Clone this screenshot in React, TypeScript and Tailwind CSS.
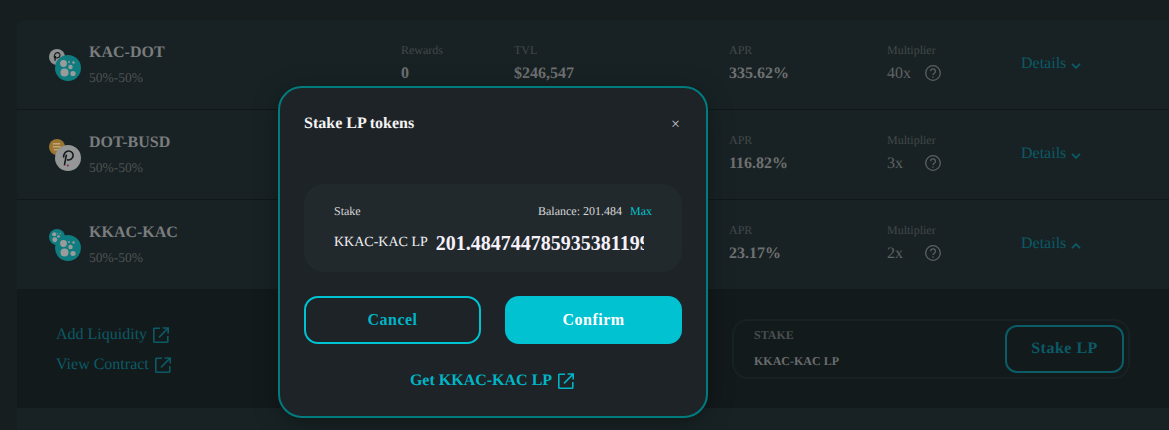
import React from 'react';

const ExternalIcon = ({ className }: { className: string }) => (
  <svg viewBox="0 0 16 16" fill="none" stroke="currentColor" strokeWidth="1.6" className={className}>
    <path d="M7 1.2H1.6a.8.8 0 0 0-.8.8v12.4a.8.8 0 0 0 .8.8H14a.8.8 0 0 0 .8-.8V9" />
    <path d="M6 10.4 14.6 1.6M9.6 1h5.6v5.6" />
  </svg>
);

const HelpIcon = () => (
  <svg viewBox="0 0 16 16" fill="none" stroke="#5c6061" strokeWidth="1.3" className="w-4 h-4 mb-[2px]">
    <circle cx="8" cy="8" r="7.3" />
    <path d="M5.6 6.2a2.4 2.4 0 1 1 3.6 2.1c-.8.4-1.2.9-1.2 1.7" />
    <circle cx="8" cy="12" r=".8" fill="#5c6061" stroke="none" />
  </svg>
);

const Chevron = ({ up }: { up?: boolean }) => (
  <svg viewBox="0 0 10 6" fill="none" stroke="#0b5a66" strokeWidth="1.9" className="w-[10px] h-[6px] ml-[5px] mt-[3px]">
    <path d={up ? 'M1 5.2 5 1.2 9 5.2' : 'M1 .8 5 4.8 9 .8'} />
  </svg>
);

const KacCoin = ({ className }: { className: string }) => (
  <svg viewBox="0 0 26 26" className={className}>
    <circle cx="13" cy="13" r="13" fill="#0f7d7f" />
    <circle cx="8.5" cy="8.5" r="3.4" fill="#9a9c9c" />
    <circle cx="9.5" cy="17.5" r="4" fill="#9a9c9c" />
    <circle cx="15.5" cy="12" r="2.2" fill="#9a9c9c" />
    <circle cx="18" cy="18.5" r="2.6" fill="#9a9c9c" />
    <circle cx="14" cy="7" r=".9" fill="#9a9c9c" />
    <circle cx="18.5" cy="7.5" r="1.2" fill="#9a9c9c" />
  </svg>
);

const DotCoin = ({ className }: { className: string }) => (
  <svg viewBox="0 0 26 26" className={className}>
    <circle cx="13" cy="13" r="13" fill="#959797" />
    <path d="M8.6 12.6C8.4 8.6 10.8 6 13.6 6c2.9 0 4.8 2.3 4.5 4.9-.3 2.8-3 4.6-6.2 3.9M11.4 9.6 9.4 20.4" fill="none" stroke="#141a1c" strokeWidth="1.6" />
    <circle cx="12.8" cy="20.4" r="1" fill="#9a1450" />
  </svg>
);

const BusdCoin = ({ className }: { className: string }) => (
  <svg viewBox="0 0 16 16" className={className}>
    <circle cx="8" cy="8" r="8" fill="#9a7430" />
    <path d="M5 3.5 12 6M4 6.5l7.5 2.5M4 9.5l6 2" stroke="#c2ad80" strokeWidth="1.3" transform="rotate(-20 8 8)" />
  </svg>
);

const SmallDotCoin = ({ className }: { className: string }) => (
  <svg viewBox="0 0 16 16" className={className}>
    <circle cx="8" cy="8" r="8" fill="#8f9191" />
    <path d="M5.5 9.5C4.6 6 6.4 3.6 8.5 3.7c1.8.1 2.8 1.6 2.4 3.2-.4 1.5-2.2 2.3-3.8 1.8M6.6 7 5.9 11.8" fill="none" stroke="#141a1c" strokeWidth="1.2" />
  </svg>
);

const farms = [
  { name: 'KAC-DOT', rewards: '0', tvl: '$246,547', apr: '335.62%', mult: '40x', small: <SmallDotCoin className="w-full h-full" />, big: <KacCoin className="w-full h-full" /> },
  { name: 'DOT-BUSD', rewards: '', tvl: '', apr: '116.82%', mult: '3x', small: <BusdCoin className="w-full h-full" />, big: <DotCoin className="w-full h-full" /> },
  { name: 'KKAC-KAC', rewards: '', tvl: '', apr: '23.17%', mult: '2x', small: <KacCoin className="w-full h-full" />, big: <KacCoin className="w-full h-full" />, open: true },
];

const Row = ({ farm, last }: { farm: (typeof farms)[number]; last: boolean }) => (
  <div className={`grid grid-cols-[40px_312px_113px_215px_158px_134px_1fr] items-center pl-8 ${last ? 'h-[89px]' : 'h-[90px] border-b border-[#111719]'}`}>
    <div className="relative w-8 h-[34px] mt-[3px]">
      <div className="absolute left-0 top-0 w-4 h-4">{farm.small}</div>
      <div className="absolute left-[6px] top-[6px] w-[26px] h-[26px]">{farm.big}</div>
    </div>
    <div>
      <div className="text-base leading-[18px] font-bold text-[#7a7c7d]">{farm.name}</div>
      <div className="text-[13.5px] leading-[15px] mt-2 text-[#4e5253]">50%-50%</div>
    </div>
    <div className="-mt-1">
      {farm.rewards && <div className="text-xs leading-[14px] text-[#43484a]">Rewards</div>}
      {farm.rewards && <div className="text-base leading-[18px] mt-2 font-bold text-[#6e7071]">{farm.rewards}</div>}
    </div>
    <div className="-mt-1">
      {farm.tvl && <div className="text-xs leading-[14px] text-[#43484a]">TVL</div>}
      {farm.tvl && <div className="text-base leading-[18px] mt-2 font-bold text-[#6e7071]">{farm.tvl}</div>}
    </div>
    <div className="-mt-1">
      <div className="text-xs leading-[14px] text-[#43484a]">APR</div>
      <div className="text-base leading-[18px] mt-2 font-bold text-[#6e7071]">{farm.apr}</div>
    </div>
    <div className="-mt-1">
      <div className="text-xs leading-[14px] text-[#43484a]">Multiplier</div>
      <div className="flex items-center mt-2 h-[18px]">
        <span className="text-base w-[38px] text-[#5f6263]">{farm.mult}</span>
        <HelpIcon />
      </div>
    </div>
    <div className="flex items-center text-base text-[#0b5a66] -mt-[1px]">
      Details
      <Chevron up={farm.open} />
    </div>
  </div>
);

const ExpandedPanel = () => (
  <div className="h-[119px] bg-[#131a1c] flex items-center justify-between pl-[39px] pr-[39px]">
    <div className="flex flex-col gap-[12px] text-base leading-[18px] text-[#0b5a66] mt-[2px]">
      <div className="flex items-center gap-[6px]">
        Add Liquidity
        <ExternalIcon className="w-4 h-4 text-[#0b5a66]" />
      </div>
      <div className="flex items-center gap-[6px]">
        View Contract
        <ExternalIcon className="w-4 h-4 text-[#0b5a66]" />
      </div>
    </div>
    <div className="w-[398px] h-[60px] mt-[1px] border-2 border-[#182123] rounded-2xl flex items-center justify-between pl-5 pr-1">
      <div className="-mt-[2px]">
        <div className="text-xs leading-[14px] font-bold text-[#4a4e4f]">STAKE</div>
        <div className="text-xs leading-[14px] mt-[12px] font-bold text-[#6a6c6d]">KKAC-KAC LP</div>
      </div>
      <div className="w-[119px] h-12 border-2 border-[#0a5c67] rounded-xl flex items-center justify-center text-base font-bold tracking-[0.5px] text-[#0b5a66]">
        Stake LP
      </div>
    </div>
  </div>
);

const StakeModal = () => (
  <div className="absolute left-[278px] top-[86px] w-[430px] h-[332px] bg-[#1e2327] border-2 border-[#007c7e] rounded-[24px] shadow-[0_4px_24px_rgba(0,0,0,0.35)] px-[24px]">
    <div className="flex items-center justify-between h-[70px]">
      <div className="text-base font-bold text-[#f4f4f4] mt-[2px]">Stake LP tokens</div>
      <div className="text-base text-[#c4c6c8] mt-[4px] pr-[2px]">×</div>
    </div>
    <div className="mt-[26px] h-[88px] bg-[#22292c] rounded-[20px] pl-[30px] pr-[30px] pt-5">
      <div className="flex items-center justify-between text-xs leading-[14px]">
        <span className="text-[#d4d6d8]">Stake</span>
        <span className="flex gap-2">
          <span className="text-[#d4d6d8]">Balance: 201.484</span>
          <span className="text-[#00c2d1]">Max</span>
        </span>
      </div>
      <div className="flex items-center mt-[13px] h-[24px]">
        <span className="text-sm text-[#f0f0f4] whitespace-nowrap">KKAC-KAC LP</span>
        <input
          readOnly
          value="201.48474478593538119971"
          className="ml-2 w-[208px] bg-transparent outline-none text-xl font-bold text-[#f5f0fa]"
        />
      </div>
    </div>
    <div className="flex gap-6 mt-6">
      <button className="w-[177px] h-12 border-2 border-[#00c2d1] rounded-[14px] text-base font-bold tracking-[0.5px] text-[#00b5c6]">Cancel</button>
      <button className="w-[177px] h-12 bg-[#00c2d1] rounded-[14px] text-base font-bold tracking-[0.5px] text-white">Confirm</button>
    </div>
    <div className="flex items-center justify-center gap-[6px] mt-[25px] -ml-[2px] text-base font-bold text-[#00b5c6]">
      Get KKAC-KAC LP
      <ExternalIcon className="w-4 h-4 text-[#00b5c6]" />
    </div>
  </div>
);

export default function App() {
  return (
    <div className="relative w-[1169px] h-[430px] overflow-hidden bg-[#161e20] font-['Liberation_Serif',serif] [text-rendering:geometricPrecision]">
      <div className="ml-[17px] pt-5">
        <div className="bg-[#182224] rounded-tl-lg">
          {farms.map((farm, i) => (
            <Row key={farm.name} farm={farm} last={i === farms.length - 1} />
          ))}
          <ExpandedPanel />
          <div className="h-[23px]" />
        </div>
      </div>
      <StakeModal />
    </div>
  );
}
